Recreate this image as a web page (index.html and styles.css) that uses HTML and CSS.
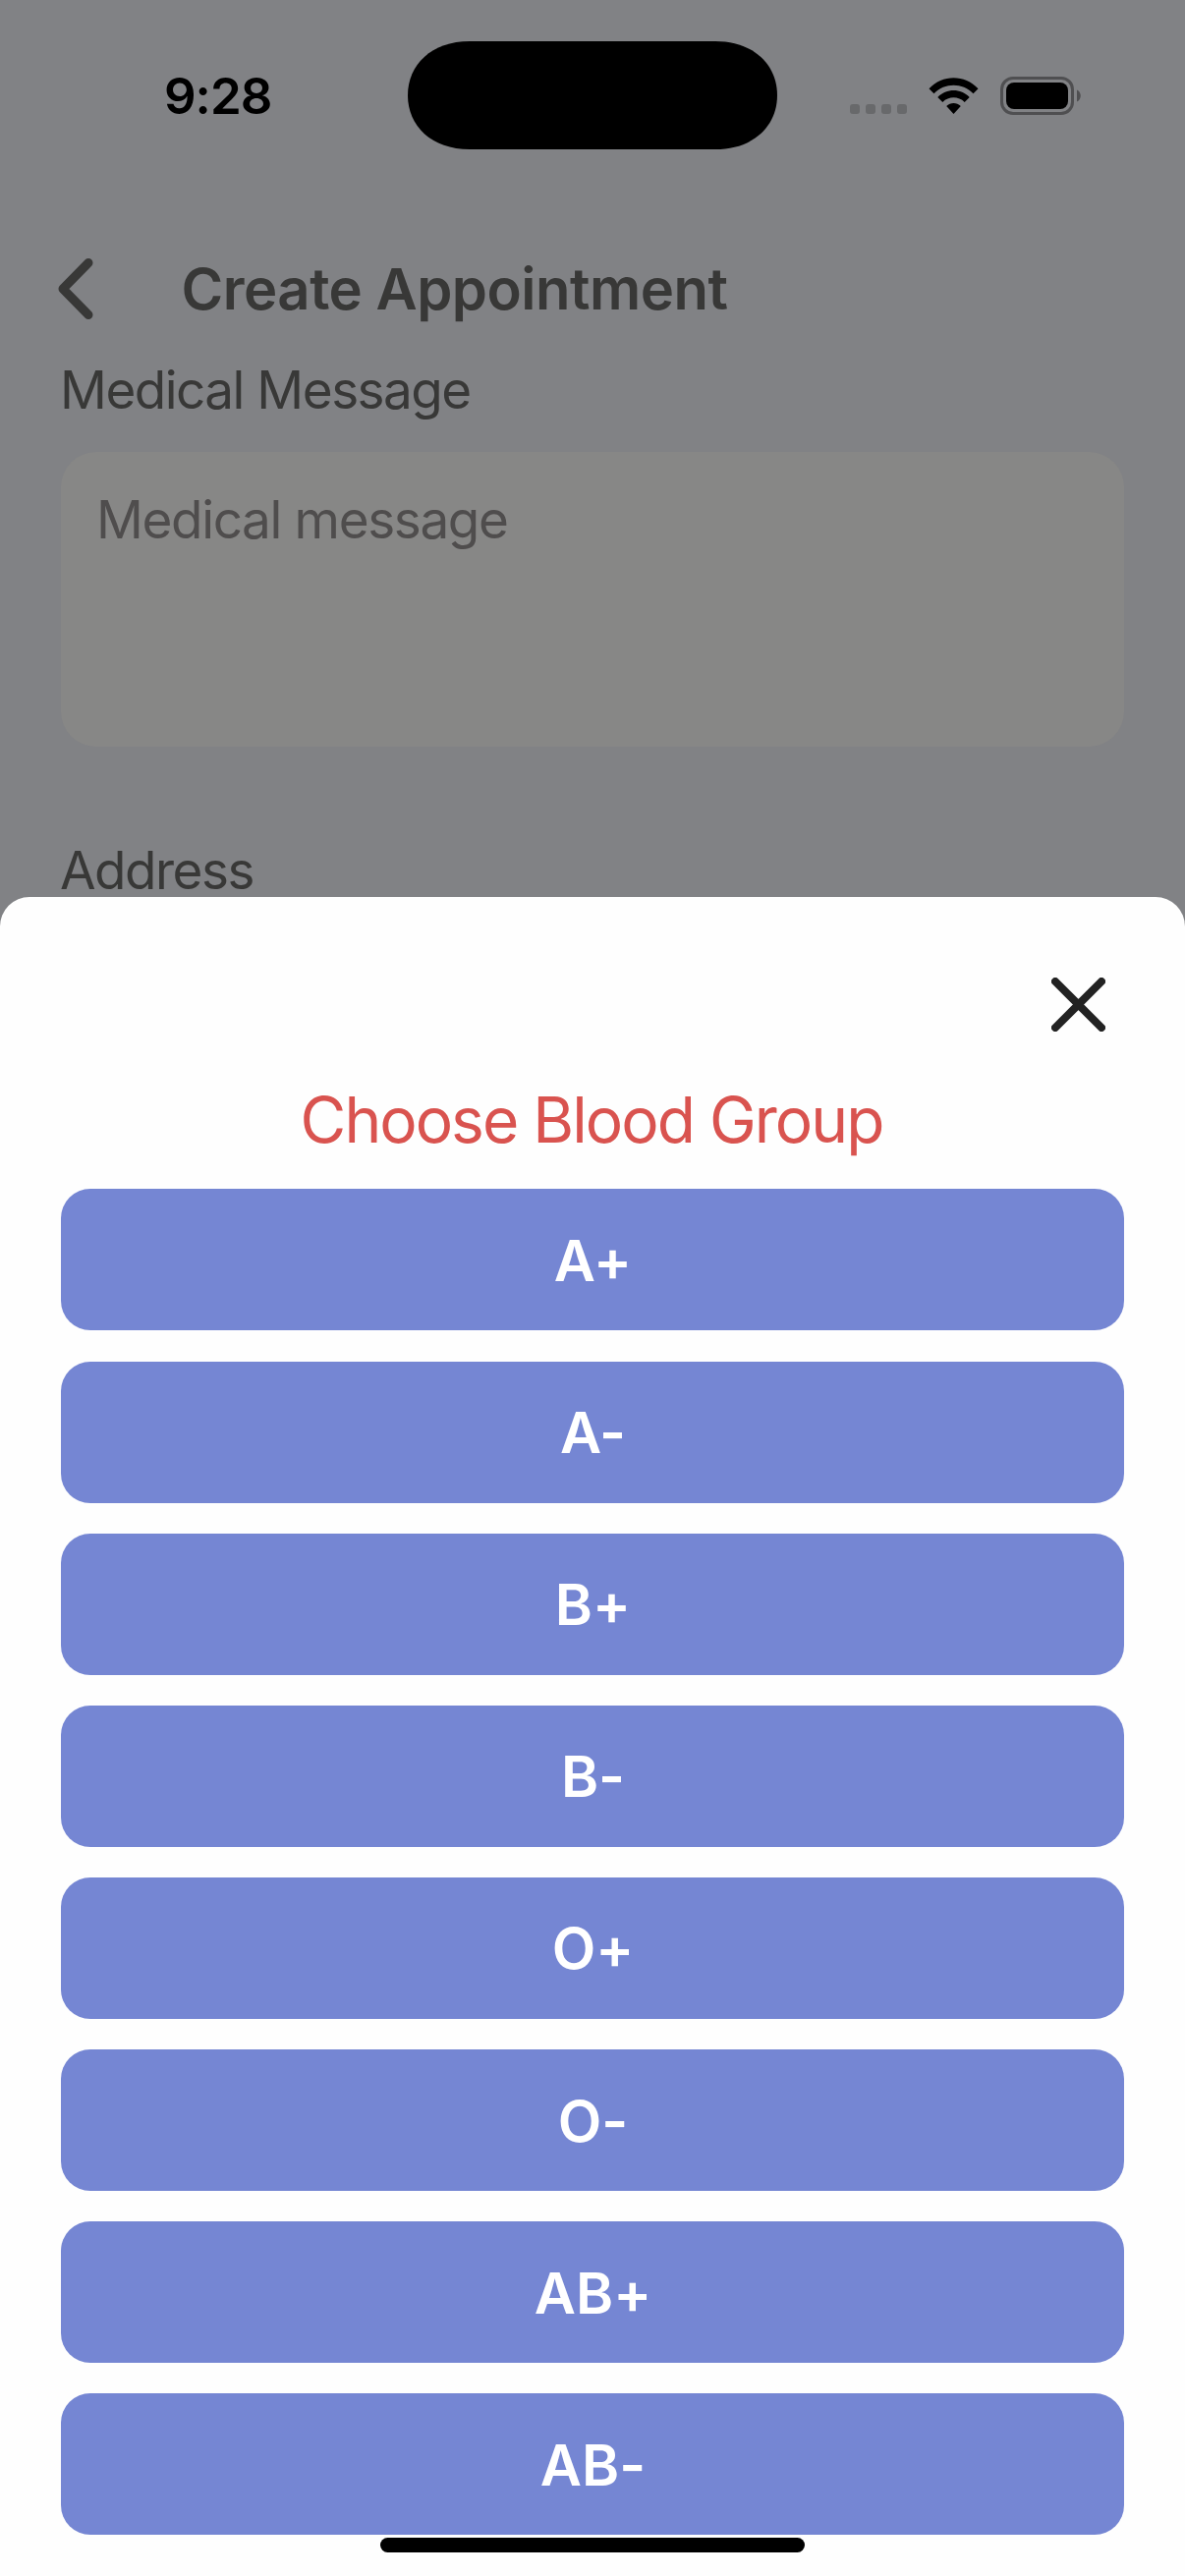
FILE: index.html
```html
<!DOCTYPE html>
<html lang="en">
<head>
<meta charset="utf-8">
<title>Create Appointment</title>
<link rel="stylesheet" href="styles.css">
</head>
<body>
<div class="screen">
  <header class="status-bar">
    <div class="time">9:28</div>
    <svg class="island" viewBox="0 0 376 110"><path d="M63 0H313C352 0 376 24 376 55S352 110 313 110H63C24 110 0 86 0 55S24 0 63 0Z"/></svg>
    <div class="indicators">
      <svg class="signal" viewBox="0 0 58 10"><rect width="10" height="10" rx="3"/><rect x="16" width="10" height="10" rx="3"/><rect x="32" width="10" height="10" rx="3"/><rect x="48" width="10" height="10" rx="3"/></svg>
      <svg class="wifi" viewBox="0 0 51 38"><path d="M0.5 11.2C14-3.5 37-3.5 50.500 11.200L45.500 16.200C34.500 5 16.500 5 5.500 16.200ZM9.300 20C18.300 10.700 32.700 10.700 41.700 20L36.700 25C30.500 18.800 20.500 18.800 14.300 25ZM18.200 29C22.300 24.900 28.700 24.900 32.800 29L25.500 37Z"/></svg>
      <svg class="battery" viewBox="0 0 83 39"><rect class="battery-shell" x="1.500" y="1.500" width="72" height="36" rx="11.500"/><rect x="6" y="6" width="63" height="27" rx="8"/><path class="battery-cap" d="M78 13.500C83 15.500 83 23.500 78 25.500Z"/></svg>
    </div>
  </header>
  <nav class="nav">
    <svg class="back" viewBox="0 0 36 62"><path d="M31 4.500L5 31L31 57.500"/></svg>
    <h1 class="nav-title">Create Appointment</h1>
  </nav>
  <main class="form">
    <label class="label message-label">Medical Message</label>
    <div class="textarea">Medical message</div>
    <label class="label address-label">Address</label>
  </main>
  <section class="sheet">
    <div class="sheet-top">
      <svg class="close" viewBox="0 0 55 55"><path d="M4 4L51 51M51 4L4 51"/></svg>
    </div>
    <h2 class="sheet-title">Choose Blood Group</h2>
    <div class="options">
      <div class="option">A+</div>
      <div class="option">A-</div>
      <div class="option">B+</div>
      <div class="option">B-</div>
      <div class="option">O+</div>
      <div class="option">O-</div>
      <div class="option">AB+</div>
      <div class="option">AB-</div>
    </div>
    <div class="home-indicator"></div>
  </section>
</div>
</body>
</html>
```
FILE: styles.css
```css
* { box-sizing: border-box; }
body {
  margin: 0;
  background: #818285;
  font-family: Inter, "Liberation Sans", sans-serif;
}
h1, h2 { margin: 0; }
svg { display: block; flex: none; }
.screen {
  width: 1206px;
  height: 2622px;
  overflow: hidden;
  display: flex;
  flex-direction: column;
}
.status-bar {
  height: 194px;
  flex: none;
  display: grid;
  grid-template-columns: 415px 376px 1fr;
  align-items: start;
  padding-top: 42px;
}
.time {
  padding: 25px 0 0 167px;
  font-size: 51px;
  line-height: 62px;
  font-weight: 600;
  letter-spacing: -1px;
  white-space: nowrap;
}
.island { width: 376px; height: 110px; }
.indicators {
  display: flex;
  align-items: flex-end;
  height: 75px;
  padding-left: 74px;
}
.signal { width: 58px; height: 10px; fill: #68696b; margin-bottom: 1px; }
.wifi { width: 51px; height: 38px; margin: 0 22px 0 22px; }
.battery { width: 83px; height: 39px; }
.battery-shell { fill: none; stroke: #4f4f51; stroke-width: 3; }
.battery-cap { fill: #4f4f51; }
.nav {
  height: 166px;
  flex: none;
  display: flex;
  align-items: center;
  padding: 33px 0 0 58.500px;
  color: #383837;
}
.back {
  width: 36px;
  height: 62px;
  fill: none;
  stroke: #383837;
  stroke-width: 9;
  stroke-linecap: round;
  stroke-linejoin: round;
}
.nav-title {
  margin-left: 90px;
  font-size: 58px;
  line-height: 70px;
  font-weight: 600;
  letter-spacing: -0.500px;
}
.form {
  height: 553px;
  flex: none;
  padding: 0 62px;
  color: #383837;
}
.label {
  display: block;
  margin-left: -1px;
  font-size: 53px;
  line-height: 64px;
  letter-spacing: -1.500px;
}
.message-label { padding-top: 5px; }
.textarea {
  height: 300px;
  margin-top: 31px;
  padding: 37px 36px;
  border-radius: 36px;
  background: #878786;
  color: #4f4d4d;
  font-size: 53px;
  line-height: 64px;
  letter-spacing: -1.350px;
}
.address-label { margin-top: 94px; }
.sheet {
  flex: 1;
  background: #fefefe;
  border-radius: 30px 30px 0 0;
  padding: 82px 62px 0;
}
.sheet-top {
  display: flex;
  justify-content: flex-end;
  padding-right: 19px;
}
.close {
  width: 55px;
  height: 55px;
  fill: none;
  stroke: #222;
  stroke-width: 8;
  stroke-linecap: round;
}
.sheet-title {
  margin-top: 50px;
  padding-right: 2px;
  text-align: center;
  color: #d9534f;
  font-size: 64px;
  line-height: 80px;
  font-weight: 400;
  letter-spacing: -1.950px;
}
.options {
  margin-top: 30.400px;
  display: flex;
  flex-direction: column;
  gap: 31.140px;
}
.option {
  height: 144px;
  display: flex;
  align-items: center;
  justify-content: center;
  padding: 1px 0 0 1px;
  border-radius: 30px;
  background: #7586d3;
  color: #fff;
  font-size: 58px;
  font-weight: 600;
  font-feature-settings: "calt" 0;
}
.home-indicator {
  width: 432px;
  height: 15px;
  margin: 3px auto 0;
  border-radius: 8px;
  background: #000;
}
```
